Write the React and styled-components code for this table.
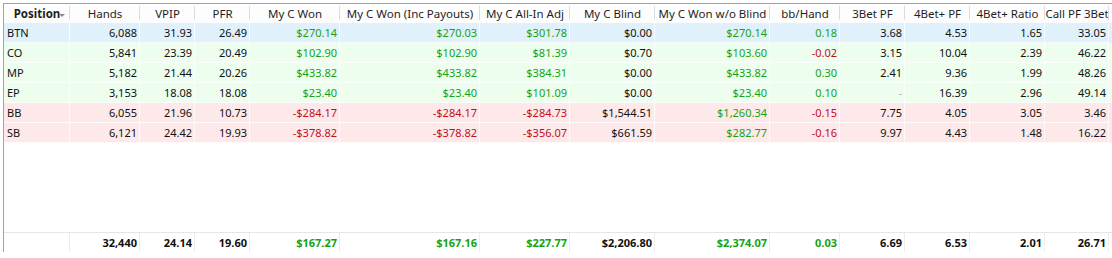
import React from 'react'
import styled, { createGlobalStyle } from 'styled-components'

const GlobalStyle = createGlobalStyle`
  html, body {
    margin: 0;
    padding: 0;
    background: #ffffff;
    overflow: hidden;
  }
  body {
    font-family: "Noto Sans", "Open Sans", sans-serif;
    font-size: 11px;
    color: #111;
  }
`

const COLS = '66px 70px 55px 55px 90px 140px 90px 85px 115px 70px 65px 65px 75px 64px'

const Grid = styled.div`
  margin: 3px 0 0 3px;
  width: 1112px;
  height: 248px;
  border-top: 1px solid #a3a3a3;
  border-left: 1px solid #a3a3a3;
  display: flex;
  flex-direction: column;
  background: #fff;
`

const HeaderRow = styled.div`
  display: grid;
  grid-template-columns: ${COLS};
  height: 19px;
  background: #fdfdfd;
`

const HeaderCell = styled.div`
  position: relative;
  display: flex;
  align-items: center;
  justify-content: center;
  font-size: 11.5px;
  color: #1e1e1e;
  font-weight: ${p => (p.$bold ? 700 : 400)};
  white-space: nowrap;
  overflow: visible;
  &::after {
    content: '';
    position: absolute;
    right: 0;
    top: 2px;
    bottom: 3px;
    width: 1px;
    background: #dcdcdc;
  }
`

const SortArrow = styled.span`
  position: absolute;
  right: 5px;
  top: 10px;
  width: 0;
  height: 0;
  border-left: 3px solid transparent;
  border-right: 3px solid transparent;
  border-top: 3px solid #8a8a8a;
`

const tones = {
  blue: '#e0f1fc',
  green: '#edfdee',
  red: '#fde9ea',
}

const Row = styled.div`
  display: grid;
  grid-template-columns: ${COLS};
  height: 20px;
  background: ${p => tones[p.$tone]};
`

const textColors = {
  pos: '#14a314',
  neg: '#c40d1e',
  plain: '#111',
  dim: '#b8b8b8',
}

const Cell = styled.div`
  display: flex;
  align-items: center;
  justify-content: ${p => (p.$left ? 'flex-start' : 'flex-end')};
  padding: ${p => (p.$left ? '0 2px 0 3px' : '0 2px')};
  border-right: 1px solid rgba(255, 255, 255, 0.75);
  border-bottom: 1px solid rgba(255, 255, 255, 0.75);
  color: ${p => textColors[p.$color || 'plain']};
  white-space: nowrap;
  overflow: hidden;
`

const Spacer = styled.div`
  flex: 1;
`

const FooterRow = styled.div`
  display: grid;
  grid-template-columns: ${COLS};
  height: 19px;
  border-top: 1px solid #e6e6e6;
`

const FooterCell = styled.div`
  display: flex;
  align-items: center;
  justify-content: flex-end;
  padding: 0 2px;
  border-right: 1px solid #ececec;
  font-weight: 700;
  color: ${p => textColors[p.$color || 'plain']};
  white-space: nowrap;
`

const columns = [
  { key: 'pos', title: 'Position', left: true },
  { key: 'hands', title: 'Hands' },
  { key: 'vpip', title: 'VPIP' },
  { key: 'pfr', title: 'PFR' },
  { key: 'won', title: 'My C Won', signed: true },
  { key: 'inc', title: 'My C Won (Inc Payouts)', signed: true },
  { key: 'allin', title: 'My C All-In Adj', signed: true },
  { key: 'blind', title: 'My C Blind' },
  { key: 'wob', title: 'My C Won w/o Blind', signed: true },
  { key: 'bb', title: 'bb/Hand', signed: true },
  { key: 'tb', title: '3Bet PF' },
  { key: 'fb', title: '4Bet+ PF' },
  { key: 'ratio', title: '4Bet+ Ratio' },
  { key: 'call', title: 'Call PF 3Bet' },
]

const toRow = (tone, values) => {
  const row = { tone }
  columns.forEach((c, i) => { row[c.key] = values[i] })
  return row
}

const rows = [
  toRow('blue', ['BTN', '6,088', '31.93', '26.49', '$270.14', '$270.03', '$301.78', '$0.00', '$270.14', '0.18', '3.68', '4.53', '1.65', '33.05']),
  toRow('green', ['CO', '5,841', '23.39', '20.49', '$102.90', '$102.90', '$81.39', '$0.70', '$103.60', '-0.02', '3.15', '10.04', '2.39', '46.22']),
  toRow('green', ['MP', '5,182', '21.44', '20.26', '$433.82', '$433.82', '$384.31', '$0.00', '$433.82', '0.30', '2.41', '9.36', '1.99', '48.26']),
  toRow('green', ['EP', '3,153', '18.08', '18.08', '$23.40', '$23.40', '$101.09', '$0.00', '$23.40', '0.10', '-', '16.39', '2.96', '49.14']),
  toRow('red', ['BB', '6,055', '21.96', '10.73', '-$284.17', '-$284.17', '-$284.73', '$1,544.51', '$1,260.34', '-0.15', '7.75', '4.05', '3.05', '3.46']),
  toRow('red', ['SB', '6,121', '24.42', '19.93', '-$378.82', '-$378.82', '-$356.07', '$661.59', '$282.77', '-0.16', '9.97', '4.43', '1.48', '16.22']),
]

const totals = toRow(null, ['', '32,440', '24.14', '19.60', '$167.27', '$167.16', '$227.77', '$2,206.80', '$2,374.07', '0.03', '6.69', '6.53', '2.01', '26.71'])

const colorFor = (col, value) => {
  if (value === '-') return 'dim'
  if (!col.signed) return 'plain'
  return value.startsWith('-') ? 'neg' : 'pos'
}

const App = () => {
  return (
    <>
      <GlobalStyle />
      <Grid>
        <HeaderRow>
          {columns.map(c => (
            <HeaderCell key={c.key} $bold={c.key === 'pos'}>
              {c.title}
              {c.key === 'pos' && <SortArrow />}
            </HeaderCell>
          ))}
        </HeaderRow>
        {rows.map(r => (
          <Row key={r.pos} $tone={r.tone}>
            {columns.map(c => (
              <Cell key={c.key} $left={c.left} $color={colorFor(c, r[c.key])}>
                {r[c.key]}
              </Cell>
            ))}
          </Row>
        ))}
        <Spacer />
        <FooterRow>
          {columns.map(c => (
            <FooterCell key={c.key} $color={colorFor(c, totals[c.key])}>
              {totals[c.key]}
            </FooterCell>
          ))}
        </FooterRow>
      </Grid>
    </>
  )
}

export default App
